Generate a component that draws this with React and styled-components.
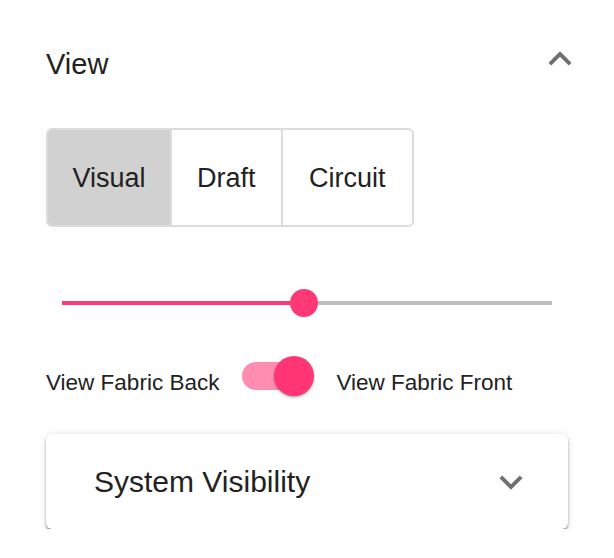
import React, { useState } from "react";
import styled, { createGlobalStyle } from "styled-components";

const Global = createGlobalStyle`
  html, body { margin: 0; padding: 0; background: #fff; }
  body { font-family: "Liberation Sans", Arial, Helvetica, sans-serif; color: rgba(0,0,0,0.87); }
`;

const Page = styled.div`
  display: flex;
  flex-direction: column;
  padding: 36px 31px 0 46px;
`;

const Header = styled.div`
  display: flex;
  align-items: flex-start;
  justify-content: space-between;
  height: 46px;
`;

const Title = styled.div`
  font-size: 29px;
  line-height: 34px;
  margin-top: 11px;
  color: #222;
`;

const IconBox = styled.div`
  width: 46px;
  height: 46px;
  display: flex;
  color: #6f6f6f;
  svg { width: 46px; height: 46px; fill: currentColor; }
`;

const Group = styled.div`
  display: flex;
  align-self: flex-start;
  margin-top: 46px;
  border: 2px solid #dcdcdc;
  border-radius: 6px;
  overflow: hidden;
  height: 99px;
  box-sizing: border-box;
`;

const ToggleBtn = styled.button`
  border: none;
  border-left: ${(p) => (p.$first ? "none" : "2px solid #dcdcdc")};
  background: ${(p) => (p.$selected ? "#d1d1d1" : "#fff")};
  font-family: inherit;
  font-size: 27px;
  color: #222;
  padding: 2px ${(p) => p.$pad}px 0;
  cursor: pointer;
`;

const SliderWrap = styled.div`
  position: relative;
  height: 28px;
  margin: 62px 31px 0 16px;
`;

const Track = styled.div`
  position: absolute;
  left: 0;
  right: 0;
  top: 12px;
  height: 4px;
  background: #bdbdbd;
`;

const Fill = styled.div`
  position: absolute;
  left: 0;
  top: 12px;
  height: 4px;
  background: #ff3877;
`;

const Thumb = styled.div`
  position: absolute;
  top: 0;
  width: 28px;
  height: 28px;
  margin-left: -14px;
  border-radius: 50%;
  background: #ff3877;
`;

const SwitchRow = styled.div`
  display: flex;
  align-items: flex-start;
  margin-top: 39px;
  height: 40px;
`;

const Label = styled.span`
  font-size: 22.5px;
  line-height: 26px;
  margin-top: 14px;
  color: #222;
`;

const SwitchRoot = styled.div`
  position: relative;
  width: 72px;
  height: 40px;
  margin: 0 22px 0 23px;
  cursor: pointer;
`;

const SwitchTrack = styled.div`
  position: absolute;
  left: 0;
  top: 6px;
  width: 66px;
  height: 28px;
  border-radius: 14px;
  background: #ff8db0;
`;

const SwitchThumb = styled.div`
  position: absolute;
  top: 0;
  left: ${(p) => (p.$on ? 32 : 0)}px;
  width: 40px;
  height: 40px;
  border-radius: 50%;
  background: #ff3574;
  box-shadow: 0 2px 2px -1px rgba(0,0,0,0.2), 0 1px 2px 0 rgba(0,0,0,0.14), 0 2px 4px 0 rgba(0,0,0,0.12);
`;

const Card = styled.div`
  display: flex;
  align-items: center;
  justify-content: space-between;
  margin: 38px 15px 0 0;
  height: 95px;
  padding: 0 34px 0 48px;
  border-radius: 6px;
  background: #fff;
  box-shadow: 0 3px 3px -1px rgba(0,0,0,0.45), 0 1px 2px 0 rgba(0,0,0,0.16), 0 1px 7px 0 rgba(0,0,0,0.14);
`;

const CardTitle = styled.span`
  font-size: 30px;
  color: #222;
`;

const ExpandLess = () => (
  <svg viewBox="0 0 24 24"><path d="M12 8l-6 6 1.41 1.41L12 10.83l4.59 4.58L18 14z" /></svg>
);
const ExpandMore = () => (
  <svg viewBox="0 0 24 24"><path d="M16.59 8.59L12 13.17 7.41 8.59 6 10l6 6 6-6z" /></svg>
);

export default function App() {
  const [mode, setMode] = useState("Visual");
  const [front, setFront] = useState(true);
  const value = 49.4;
  const buttons = [
    { name: "Visual", pad: 24.5 },
    { name: "Draft", pad: 25 },
    { name: "Circuit", pad: 26.5 },
  ];
  return (
    <>
      <Global />
      <Page>
        <Header>
          <Title>View</Title>
          <IconBox><ExpandLess /></IconBox>
        </Header>
        <Group>
          {buttons.map((b, i) => (
            <ToggleBtn
              key={b.name}
              $first={i === 0}
              $pad={b.pad}
              $selected={mode === b.name}
              onClick={() => setMode(b.name)}
            >
              {b.name}
            </ToggleBtn>
          ))}
        </Group>
        <SliderWrap>
          <Track />
          <Fill style={{ width: `${value}%` }} />
          <Thumb style={{ left: `${value}%` }} />
        </SliderWrap>
        <SwitchRow>
          <Label>View Fabric Back</Label>
          <SwitchRoot onClick={() => setFront(!front)}>
            <SwitchTrack />
            <SwitchThumb $on={front} />
          </SwitchRoot>
          <Label>View Fabric Front</Label>
        </SwitchRow>
        <Card>
          <CardTitle>System Visibility</CardTitle>
          <IconBox><ExpandMore /></IconBox>
        </Card>
      </Page>
    </>
  );
}
